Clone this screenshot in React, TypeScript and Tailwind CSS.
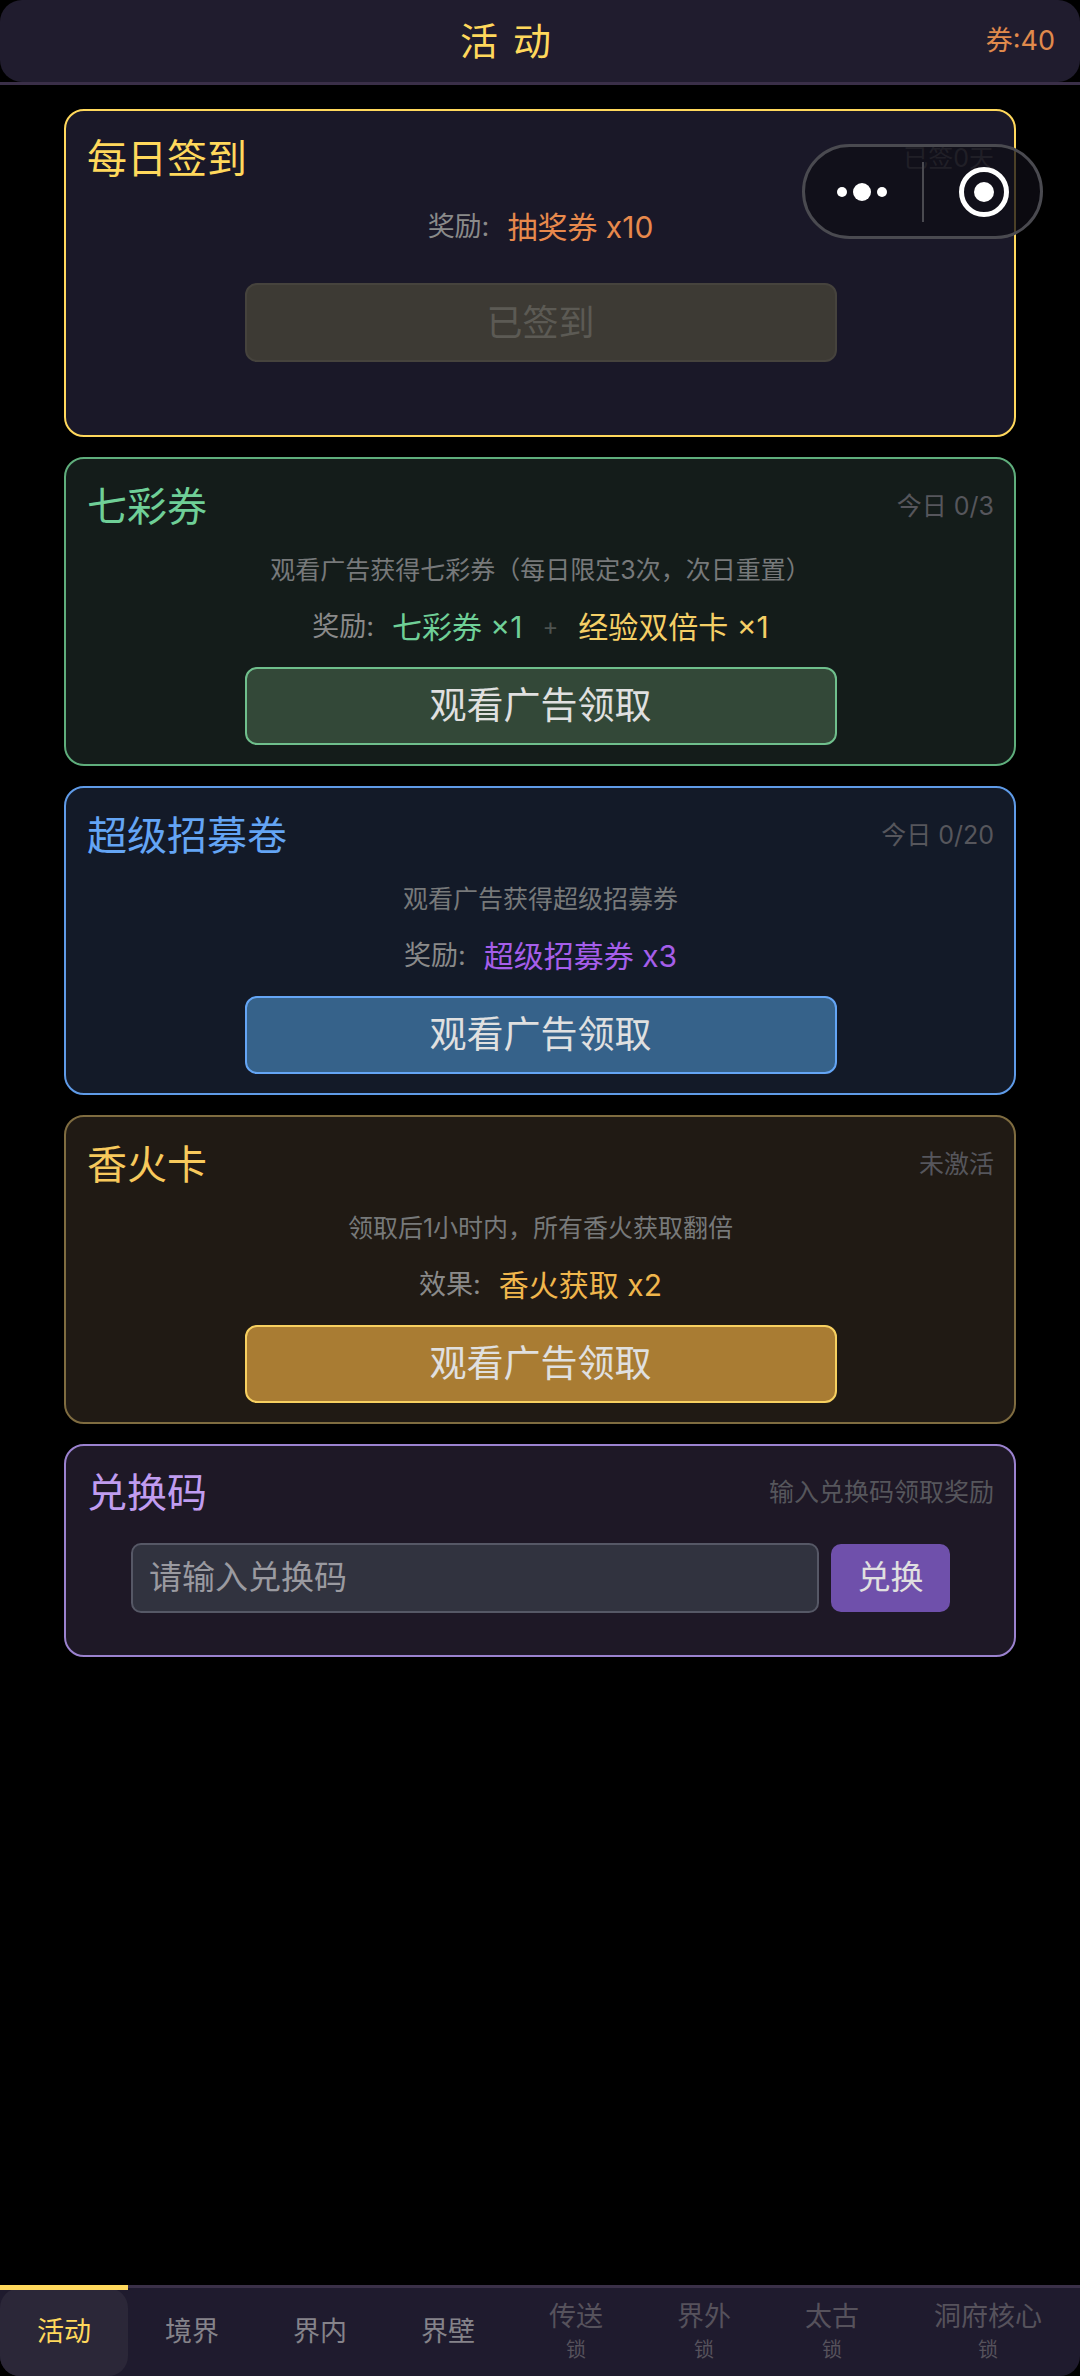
const FONT = "font-['Inter','Noto_Sans_CJK_SC','Noto_Sans',sans-serif]";

function AdButton({ className }: { className: string }) {
  return (
    <button className={`mx-auto mt-[20px] flex h-[78px] w-[592px] items-center justify-center rounded-[12px] border-2 text-[37px] text-[#e0e0e0] ${className}`}>
      观看广告领取
    </button>
  );
}

function CardHead({ title, titleColor, side }: { title: string; titleColor: string; side: string }) {
  return (
    <div className="flex items-center justify-between">
      <span className={`text-[40px] leading-[50px] ${titleColor}`}>{title}</span>
      <span className="text-[25px] text-[#56565c]">{side}</span>
    </div>
  );
}

const tabs = [
  { name: "活动", active: true },
  { name: "境界" },
  { name: "界内" },
  { name: "界壁" },
  { name: "传送", locked: true },
  { name: "界外", locked: true },
  { name: "太古", locked: true },
  { name: "洞府核心", locked: true },
];

export default function App() {
  return (
    <main className={`relative flex h-[2376px] w-[1080px] flex-col overflow-hidden bg-black ${FONT}`}>
      <header className="h-[85px] shrink-0 border-b-[3px] border-[#3a2f48]">
        <div className="relative flex h-full items-center justify-center rounded-[22px] bg-[#201c2e] pr-[54px]">
          <span className="text-[38px] tracking-[15px] text-[#ffd85c]">活动</span>
          <span className="absolute right-[25px] text-[27px] text-[#e08a4c]">券:40</span>
        </div>
      </header>

      <section className="flex flex-1 flex-col gap-[20px] px-[64px] pt-[24px]">
        <div className="h-[328px] rounded-[20px] border-2 border-[#ffd85c] bg-[#1a1828] pl-[21px] pr-[20px] pt-[23px]">
          <CardHead title="每日签到" titleColor="text-[#ffd85c]" side="已签0天" />
          <p className="mt-[23px] flex items-center justify-center gap-[18px] text-[27px] leading-[40px] text-[#8a8a8a]">
            <span>奖励:</span>
            <span className="text-[30px] text-[#e8894c]">抽奖券 x10</span>
          </p>
          <button className="mx-auto mt-[36px] flex h-[79px] w-[592px] items-center justify-center rounded-[12px] border-2 border-[#46433d] bg-[#3d3a34] text-[36px] text-[#5c5a54]">
            已签到
          </button>
        </div>

        <div className="h-[309px] rounded-[20px] border-2 border-[#5fae7c] bg-[#141c1a] pl-[21px] pr-[20px] pt-[23px]">
          <CardHead title="七彩券" titleColor="text-[#6fcf97]" side="今日 0/3" />
          <p className="mt-[20px] text-center text-[25px] leading-[36px] text-[#77797a]">观看广告获得七彩券（每日限定3次，次日重置）</p>
          <p className="mt-[19px] flex items-center justify-center text-[27px] leading-[40px] text-[#8a8a8a]">
            <span>奖励:</span>
            <span className="ml-[18px] text-[30px] text-[#6fcf97]">七彩券 ×1</span>
            <span className="mx-[20px] text-[24px] text-[#4d5350]">+</span>
            <span className="text-[30px] text-[#f5cf66]">经验双倍卡 ×1</span>
          </p>
          <AdButton className="border-[#6fbf8c] bg-[#334838]" />
        </div>

        <div className="h-[309px] rounded-[20px] border-2 border-[#5f9be8] bg-[#131a28] pl-[21px] pr-[20px] pt-[23px]">
          <CardHead title="超级招募卷" titleColor="text-[#64a5f5]" side="今日 0/20" />
          <p className="mt-[20px] text-center text-[25px] leading-[36px] text-[#77797a]">观看广告获得超级招募券</p>
          <p className="mt-[19px] flex items-center justify-center gap-[18px] text-[27px] leading-[40px] text-[#8a8a8a]">
            <span>奖励:</span>
            <span className="text-[30px] text-[#a55eea]">超级招募券 x3</span>
          </p>
          <AdButton className="border-[#64a5f5] bg-[#36628a]" />
        </div>

        <div className="h-[309px] rounded-[20px] border-2 border-[#7f6c40] bg-[#201a14] pl-[21px] pr-[20px] pt-[23px]">
          <CardHead title="香火卡" titleColor="text-[#f7c95c]" side="未激活" />
          <p className="mt-[20px] text-center text-[25px] leading-[36px] text-[#77797a]">领取后1小时内，所有香火获取翻倍</p>
          <p className="mt-[19px] flex items-center justify-center gap-[18px] text-[27px] leading-[40px] text-[#8a8a8a]">
            <span>效果:</span>
            <span className="text-[30px] text-[#f0b64c]">香火获取 x2</span>
          </p>
          <AdButton className="border-[#f7d060] bg-[#a97c33]" />
        </div>

        <div className="h-[213px] rounded-[20px] border-2 border-[#9b82cf] bg-[#1e1826] pl-[21px] pr-[20px] pt-[22px]">
          <CardHead title="兑换码" titleColor="text-[#c09cf0]" side="输入兑换码领取奖励" />
          <div className="mt-[25px] flex items-center justify-center gap-[12px]">
            <div className="flex h-[70px] w-[688px] items-center rounded-[10px] border-2 border-[#565866] bg-[#31333f] px-[16px] text-[33px] text-[#9a9aa0]">请输入兑换码</div>
            <button className="h-[68px] w-[119px] rounded-[10px] bg-[#6f50ab] text-[33px] text-[#e0e0e0]">兑换</button>
          </div>
        </div>
      </section>

      <div className="absolute left-[802px] top-[144px] flex h-[95px] w-[241px] items-center rounded-full border-[3px] border-[#4a4a50] bg-[#0f0d16]/75">
        <div className="flex w-[117px] items-center justify-center gap-[6px] pr-[4px]">
          <span className="size-[10px] rounded-full bg-white" />
          <span className="size-[18px] rounded-full bg-white" />
          <span className="size-[10px] rounded-full bg-white" />
        </div>
        <span className="h-[60px] w-[2px] bg-[#4a4a50]" />
        <div className="flex flex-1 items-center justify-center pl-[4px]">
          <span className="flex size-[50px] items-center justify-center rounded-full border-[5px] border-white">
            <span className="size-[20px] rounded-full bg-white" />
          </span>
        </div>
      </div>

      <nav className="flex h-[91px] shrink-0 rounded-b-[20px] border-t-[3px] border-[#3a3048] bg-[#1f1b2e]">
        {tabs.map((tab) => (
          <div
            key={tab.name}
            className={`relative flex flex-col items-center justify-center ${tab.name === "洞府核心" ? "w-[184px]" : "w-[128px]"} ${tab.active ? "rounded-[20px] bg-[#2b2738] text-[#ffd85c]" : tab.locked ? "text-[#56525c]" : "text-[#85838a]"}`}
          >
            {tab.active && <span className="absolute -top-[3px] left-0 right-0 h-[5px] bg-[#ffd85c]" />}
            <span className="text-[27px] leading-[34px]">{tab.name}</span>
            {tab.locked && <span className="mt-[2px] text-[20px] leading-[28px]">锁</span>}
          </div>
        ))}
      </nav>
    </main>
  );
}
